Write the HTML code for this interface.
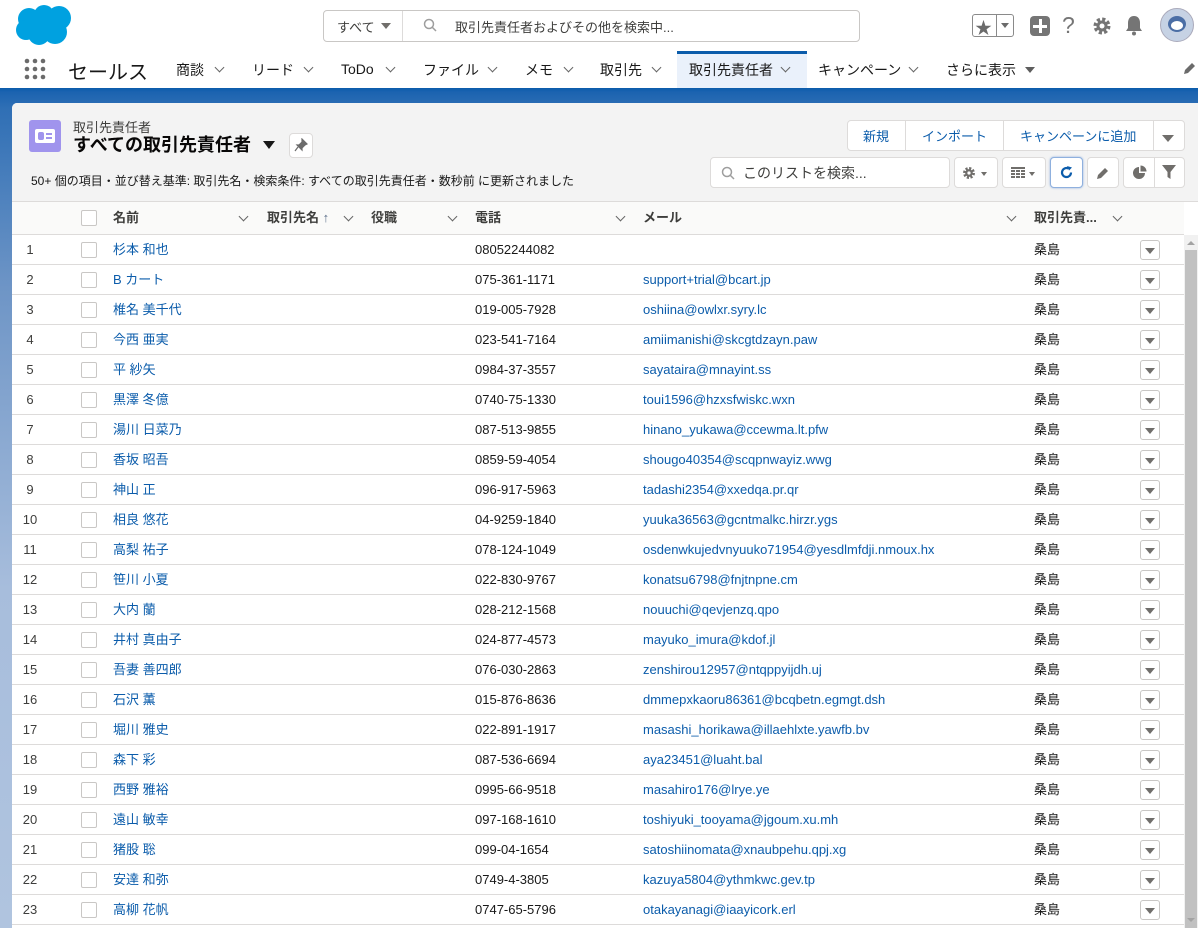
<!DOCTYPE html>
<html><head><meta charset="utf-8">
<style>
*{box-sizing:border-box;margin:0;padding:0}
body{width:1198px;height:928px;overflow:hidden;background:#fff;font-family:"Liberation Sans","Noto Sans CJK JP",sans-serif;font-size:13px;color:#080707;position:relative}
.abs{position:absolute}
.hdr{position:absolute;left:0;top:0;width:1198px;height:50px;background:#fff}
.nav{position:absolute;left:0;top:50px;width:1198px;height:38px;background:#fff}
.nav span{position:absolute;top:11px;font-size:14px;color:#181818}
.chev{position:absolute;width:7px;height:7px;border-right:1.5px solid #666;border-bottom:1.5px solid #666;transform:rotate(45deg)}
.bg{position:absolute;left:0;top:88px;width:1198px;height:840px;background:linear-gradient(180deg,#0b5cab 0,#1b63b0 4px,#2f6fb5 20px,#6e95c6 200px,#a7bddc 500px,#b0c4df 840px)}
.card{position:absolute;left:12px;top:103px;width:1186px;height:825px;background:#fff;border-radius:5px 0 0 0;overflow:hidden}
.ch{position:absolute;left:0;top:0;width:1186px;height:99px;background:#f3f3f3;border-bottom:1px solid #dddbda}
.btn{position:absolute;background:#fff;border:1px solid #dddbda;border-radius:4px}
.th{position:absolute;top:99px;left:0;width:1172px;height:33px;background:#fafaf9;border-bottom:1px solid #dddbda;font-weight:bold;font-size:13px;color:#3e3e3c}
.th span{position:absolute;top:5px}
.row{position:absolute;left:0;width:1172px;height:30px;border-bottom:1px solid #dddbda}
.row span{position:absolute;top:7px}
.n{left:0;width:36px;text-align:center;color:#3e3e3c}
.cb{position:absolute;left:69px;top:7px;width:16px;height:16px;border:1px solid #c9c7c5;border-radius:2px;background:#fff}
.row span.nm{left:101px;color:#0b5cab;top:4px}
.ph{left:463px;color:#181818}
.em{left:631px;color:#0b5cab}
.row span.ow{left:1022px;color:#181818;top:4px}
.ra{position:absolute;left:1128px;top:5px;width:20px;height:20px;border:1px solid #c9c7c5;border-radius:3px;background:#fff}
.ra:after{content:"";position:absolute;left:4px;top:7px;border-left:5px solid transparent;border-right:5px solid transparent;border-top:6px solid #706e6b}
</style></head><body>
<div class="hdr">
 <svg class="abs" style="left:15px;top:4px" width="60" height="42" viewBox="0 0 60 42"><g fill="#00a1e0"><circle cx="14" cy="15" r="11"/><circle cx="29" cy="11" r="10"/><circle cx="44" cy="14" r="12"/><circle cx="40" cy="28" r="12"/><circle cx="24" cy="30" r="11"/><circle cx="11" cy="26" r="10"/><rect x="10" y="12" width="38" height="18"/></g></svg>
 <div class="abs" style="left:323px;top:10px;width:537px;height:32px;border:1px solid #c9c7c5;border-radius:4px;background:#fff"></div>
 <div class="abs" style="left:402px;top:11px;width:1px;height:30px;background:#dddbda"></div>
 <span class="abs" style="left:337px;top:17px;font-size:13px;color:#3e3e3c">すべて</span>
 <div class="abs" style="left:381px;top:23px;border-left:5px solid transparent;border-right:5px solid transparent;border-top:6px solid #706e6b"></div>
 <svg class="abs" style="left:423px;top:18px" width="14" height="14" viewBox="0 0 14 14"><circle cx="6" cy="6" r="4.5" fill="none" stroke="#9e9e9e" stroke-width="1.5"/><path d="M9.5 9.5L13 13" stroke="#9e9e9e" stroke-width="1.5"/></svg>
 <span class="abs" style="left:455px;top:17px;font-size:13px;color:#3e3e3c">取引先責任者およびその他を検索中...</span>
 <div class="abs" style="left:972px;top:14px;width:42px;height:23px;border:1px solid #8a8a8a;border-radius:3px"></div>
 <div class="abs" style="left:996px;top:15px;width:1px;height:21px;background:#8a8a8a"></div>
 <span class="abs" style="left:975px;top:14px;font-size:17px;color:#6b6b6b">★</span>
 <div class="abs" style="left:1001px;top:23px;border-left:4px solid transparent;border-right:4px solid transparent;border-top:5px solid #6b6b6b"></div>
 <div class="abs" style="left:1030px;top:16px;width:20px;height:20px;border-radius:4px;background:#757575"></div>
 <div class="abs" style="left:1039px;top:19px;width:3px;height:14px;background:#fff"></div>
 <div class="abs" style="left:1033px;top:25px;width:14px;height:3px;background:#fff"></div>
 <span class="abs" style="left:1062px;top:12px;font-size:23px;color:#757575">?</span>
 <svg class="abs" style="left:1092px;top:16px" width="20" height="20" viewBox="0 0 20 20"><circle cx="10" cy="10" r="6.5" fill="none" stroke="#757575" stroke-width="4" stroke-dasharray="3 2.1"/><circle cx="10" cy="10" r="5.5" fill="#757575"/><circle cx="10" cy="10" r="2.5" fill="#fff"/></svg>
 <svg class="abs" style="left:1124px;top:15px" width="20" height="21" viewBox="0 0 20 21"><path d="M10 1c-4 0-6 3-6 7v5l-2 3h16l-2-3V8c0-4-2-7-6-7z" fill="#757575"/><circle cx="10" cy="18.5" r="2" fill="#757575"/></svg>
 <div class="abs" style="left:1160px;top:8px;width:34px;height:34px;border-radius:50%;background:#c6d2e4;border:1px solid #aab"></div>
 <div class="abs" style="left:1168px;top:16px;width:18px;height:16px;border-radius:50%;background:#4b6ea5"></div>
 <div class="abs" style="left:1171px;top:21px;width:12px;height:9px;border-radius:50%;background:#fff"></div>
</div>
<div class="nav">
 <svg class="abs" style="left:24px;top:8px" width="22" height="22" viewBox="0 0 22 22" fill="#6b6b6b"><circle cx="3" cy="3" r="2.3"/><circle cx="11" cy="3" r="2.3"/><circle cx="19" cy="3" r="2.3"/><circle cx="3" cy="11" r="2.3"/><circle cx="11" cy="11" r="2.3"/><circle cx="19" cy="11" r="2.3"/><circle cx="3" cy="19" r="2.3"/><circle cx="11" cy="19" r="2.3"/><circle cx="19" cy="19" r="2.3"/></svg>
 <span style="left:68px;top:6px;font-size:20px">セールス</span>
 <span style="left:176px;top:10px">商談</span><i class="chev" style="left:216px;top:14px"></i>
 <span style="left:252px;top:10px">リード</span><i class="chev" style="left:305px;top:14px"></i>
 <span style="left:341px">ToDo</span><i class="chev" style="left:387px;top:14px"></i>
 <span style="left:423px;top:10px">ファイル</span><i class="chev" style="left:489px;top:14px"></i>
 <span style="left:525px;top:10px">メモ</span><i class="chev" style="left:565px;top:14px"></i>
 <div class="abs" style="left:677px;top:1px;width:130px;height:37px;background:#eaf1fb;border-top:3px solid #0b5cab"></div>
 <span style="left:600px;top:10px">取引先</span><i class="chev" style="left:653px;top:14px"></i>
 <span style="left:689px;top:10px">取引先責任者</span><i class="chev" style="left:782px;top:14px"></i>
 <span style="left:818px;top:10px">キャンペーン</span><i class="chev" style="left:910px;top:14px"></i>
 <span style="left:946px;top:10px">さらに表示</span>
 <div class="abs" style="left:1025px;top:17px;border-left:5px solid transparent;border-right:5px solid transparent;border-top:6px solid #5e5e5e"></div>
 <svg class="abs" style="left:1182px;top:12px" width="14" height="14" viewBox="0 0 14 14"><path d="M2 12l1-4 7-7 3 3-7 7z" fill="#6b6b6b"/></svg>
</div>
<div class="bg"></div>
<div class="card">
 <div class="ch">
  <div class="abs" style="left:17px;top:17px;width:32px;height:32px;border-radius:3px;background:#a094ed"></div>
  <div class="abs" style="left:23px;top:26px;width:20px;height:14px;border-radius:2px;background:#fff"></div>
  <div class="abs" style="left:26px;top:29px;width:6px;height:8px;background:#a094ed;border-radius:2px"></div>
  <div class="abs" style="left:34px;top:30px;width:6px;height:2px;background:#a094ed"></div>
  <div class="abs" style="left:34px;top:34px;width:6px;height:2px;background:#a094ed"></div>
  <span class="abs" style="left:61px;top:14px;font-size:13px;color:#3e3e3c">取引先責任者</span>
  <span class="abs" style="left:61px;top:28px;font-size:18px;font-weight:bold">すべての取引先責任者</span>
  <div class="abs" style="left:251px;top:38px;border-left:6px solid transparent;border-right:6px solid transparent;border-top:8px solid #181818"></div>
  <div class="btn" style="left:277px;top:30px;width:24px;height:25px"></div>
  <svg class="abs" style="left:282px;top:35px" width="14" height="14" viewBox="0 0 14 14"><path d="M8 1l5 5-2 1-3 3 0 2-5-5 2 0 3-3z M4 9l-3 4" fill="#6b6b6b" stroke="#6b6b6b" stroke-width="1.2"/></svg>
  <span class="abs" style="left:19px;top:69px;font-size:12px;color:#181818">50+ 個の項目・並び替え基準: 取引先名・検索条件: すべての取引先責任者・数秒前 に更新されました</span>
  <div class="btn" style="left:835px;top:17px;width:338px;height:31px"></div>
  <div class="abs" style="left:893px;top:18px;width:1px;height:29px;background:#dddbda"></div>
  <div class="abs" style="left:991px;top:18px;width:1px;height:29px;background:#dddbda"></div>
  <div class="abs" style="left:1141px;top:18px;width:1px;height:29px;background:#dddbda"></div>
  <span class="abs" style="left:851px;top:23px;color:#0b5cab">新規</span>
  <span class="abs" style="left:910px;top:23px;color:#0b5cab">インポート</span>
  <span class="abs" style="left:1008px;top:23px;color:#0b5cab">キャンペーンに追加</span>
  <div class="abs" style="left:1150px;top:32px;border-left:6px solid transparent;border-right:6px solid transparent;border-top:7px solid #706e6b"></div>
  <div class="btn" style="left:698px;top:54px;width:240px;height:31px"></div>
  <svg class="abs" style="left:709px;top:63px" width="14" height="14" viewBox="0 0 14 14"><circle cx="6" cy="6" r="4.5" fill="none" stroke="#9e9e9e" stroke-width="1.5"/><path d="M9.5 9.5L13 13" stroke="#9e9e9e" stroke-width="1.5"/></svg>
  <span class="abs" style="left:731px;top:60px;color:#3e3e3c;font-size:14px">このリストを検索...</span>
  <div class="btn" style="left:942px;top:54px;width:44px;height:31px"></div>
  <svg class="abs" style="left:950px;top:63px" width="14" height="14" viewBox="0 0 20 20"><circle cx="10" cy="10" r="6.5" fill="none" stroke="#706e6b" stroke-width="4" stroke-dasharray="3 2.1"/><circle cx="10" cy="10" r="5.5" fill="#706e6b"/><circle cx="10" cy="10" r="2.3" fill="#fff"/></svg>
  <div class="abs" style="left:969px;top:69px;border-left:3px solid transparent;border-right:3px solid transparent;border-top:4px solid #706e6b"></div>
  <div class="btn" style="left:990px;top:54px;width:44px;height:31px"></div>
  <svg class="abs" style="left:999px;top:64px" width="14" height="12" viewBox="0 0 14 12" fill="#706e6b"><rect x="0" y="0" width="14" height="2"/><rect x="0" y="3" width="4" height="2"/><rect x="5" y="3" width="4" height="2"/><rect x="10" y="3" width="4" height="2"/><rect x="0" y="6" width="4" height="2"/><rect x="5" y="6" width="4" height="2"/><rect x="10" y="6" width="4" height="2"/><rect x="0" y="9" width="4" height="2"/><rect x="5" y="9" width="4" height="2"/><rect x="10" y="9" width="4" height="2"/></svg>
  <div class="abs" style="left:1017px;top:69px;border-left:3px solid transparent;border-right:3px solid transparent;border-top:4px solid #706e6b"></div>
  <div class="btn" style="left:1038px;top:54px;width:33px;height:31px;border-color:#8fb0de;box-shadow:0 0 2px #8fb0de"></div>
  <svg class="abs" style="left:1047px;top:62px" width="15" height="15" viewBox="0 0 15 15"><path d="M12 7.5A4.5 4.5 0 1 1 9.5 3.5" fill="none" stroke="#0b5cab" stroke-width="2.2"/><path d="M8 1l5 1.5-3 3z" fill="#0b5cab"/></svg>
  <div class="btn" style="left:1075px;top:54px;width:32px;height:31px"></div>
  <svg class="abs" style="left:1084px;top:63px" width="14" height="14" viewBox="0 0 14 14"><path d="M1 13l1-4 7-7 3 3-7 7z" fill="#706e6b"/></svg>
  <div class="btn" style="left:1111px;top:54px;width:62px;height:31px"></div>
  <div class="abs" style="left:1142px;top:55px;width:1px;height:29px;background:#dddbda"></div>
  <svg class="abs" style="left:1120px;top:62px" width="15" height="15" viewBox="0 0 15 15"><path d="M7 2A6 6 0 1 0 13 8H7z" fill="#706e6b"/><path d="M8.5 0.5A6 6 0 0 1 14.5 6.5H8.5z" fill="#706e6b"/></svg>
  <svg class="abs" style="left:1150px;top:62px" width="14" height="15" viewBox="0 0 14 15"><path d="M0 0h14L8.5 7v7l-3-2V7z" fill="#706e6b"/></svg>
 </div>
 <div class="th">
  <div class="cb" style="top:8px"></div>
  <span style="left:101px">名前</span><i class="chev" style="left:228px;top:11px"></i>
  <span style="left:255px">取引先名 <b style="color:#5c6f8a">↑</b></span><i class="chev" style="left:333px;top:11px"></i>
  <span style="left:359px">役職</span><i class="chev" style="left:437px;top:11px"></i>
  <span style="left:463px">電話</span><i class="chev" style="left:605px;top:11px"></i>
  <span style="left:631px">メール</span><i class="chev" style="left:996px;top:11px"></i>
  <span style="left:1022px">取引先責...</span><i class="chev" style="left:1102px;top:11px"></i>
 </div>
 <div class="abs" style="left:1172px;top:132px;width:14px;height:693px;background:#f1f1f1"></div>
 <div class="abs" style="left:1173px;top:147px;width:12px;height:678px;background:#c1c1c1"></div>
 <div class="abs" style="left:1175px;top:138px;border-left:4px solid transparent;border-right:4px solid transparent;border-bottom:4px solid #a3a3a3"></div>

 <div class="row" style="top:132px"><span class="n">1</span><i class="cb"></i><span class="nm">杉本 和也</span><span class="ph">08052244082</span><span class="em"></span><span class="ow">桑島</span><i class="ra"></i></div>
 <div class="row" style="top:162px"><span class="n">2</span><i class="cb"></i><span class="nm">B カート</span><span class="ph">075-361-1171</span><span class="em">support+trial@bcart.jp</span><span class="ow">桑島</span><i class="ra"></i></div>
 <div class="row" style="top:192px"><span class="n">3</span><i class="cb"></i><span class="nm">椎名 美千代</span><span class="ph">019-005-7928</span><span class="em">oshiina@owlxr.syry.lc</span><span class="ow">桑島</span><i class="ra"></i></div>
 <div class="row" style="top:222px"><span class="n">4</span><i class="cb"></i><span class="nm">今西 亜実</span><span class="ph">023-541-7164</span><span class="em">amiimanishi@skcgtdzayn.paw</span><span class="ow">桑島</span><i class="ra"></i></div>
 <div class="row" style="top:252px"><span class="n">5</span><i class="cb"></i><span class="nm">平 紗矢</span><span class="ph">0984-37-3557</span><span class="em">sayataira@mnayint.ss</span><span class="ow">桑島</span><i class="ra"></i></div>
 <div class="row" style="top:282px"><span class="n">6</span><i class="cb"></i><span class="nm">黒澤 冬億</span><span class="ph">0740-75-1330</span><span class="em">toui1596@hzxsfwiskc.wxn</span><span class="ow">桑島</span><i class="ra"></i></div>
 <div class="row" style="top:312px"><span class="n">7</span><i class="cb"></i><span class="nm">湯川 日菜乃</span><span class="ph">087-513-9855</span><span class="em">hinano_yukawa@ccewma.lt.pfw</span><span class="ow">桑島</span><i class="ra"></i></div>
 <div class="row" style="top:342px"><span class="n">8</span><i class="cb"></i><span class="nm">香坂 昭吾</span><span class="ph">0859-59-4054</span><span class="em">shougo40354@scqpnwayiz.wwg</span><span class="ow">桑島</span><i class="ra"></i></div>
 <div class="row" style="top:372px"><span class="n">9</span><i class="cb"></i><span class="nm">神山 正</span><span class="ph">096-917-5963</span><span class="em">tadashi2354@xxedqa.pr.qr</span><span class="ow">桑島</span><i class="ra"></i></div>
 <div class="row" style="top:402px"><span class="n">10</span><i class="cb"></i><span class="nm">相良 悠花</span><span class="ph">04-9259-1840</span><span class="em">yuuka36563@gcntmalkc.hirzr.ygs</span><span class="ow">桑島</span><i class="ra"></i></div>
 <div class="row" style="top:432px"><span class="n">11</span><i class="cb"></i><span class="nm">高梨 祐子</span><span class="ph">078-124-1049</span><span class="em">osdenwkujedvnyuuko71954@yesdlmfdji.nmoux.hx</span><span class="ow">桑島</span><i class="ra"></i></div>
 <div class="row" style="top:462px"><span class="n">12</span><i class="cb"></i><span class="nm">笹川 小夏</span><span class="ph">022-830-9767</span><span class="em">konatsu6798@fnjtnpne.cm</span><span class="ow">桑島</span><i class="ra"></i></div>
 <div class="row" style="top:492px"><span class="n">13</span><i class="cb"></i><span class="nm">大内 蘭</span><span class="ph">028-212-1568</span><span class="em">nouuchi@qevjenzq.qpo</span><span class="ow">桑島</span><i class="ra"></i></div>
 <div class="row" style="top:522px"><span class="n">14</span><i class="cb"></i><span class="nm">井村 真由子</span><span class="ph">024-877-4573</span><span class="em">mayuko_imura@kdof.jl</span><span class="ow">桑島</span><i class="ra"></i></div>
 <div class="row" style="top:552px"><span class="n">15</span><i class="cb"></i><span class="nm">吾妻 善四郎</span><span class="ph">076-030-2863</span><span class="em">zenshirou12957@ntqppyijdh.uj</span><span class="ow">桑島</span><i class="ra"></i></div>
 <div class="row" style="top:582px"><span class="n">16</span><i class="cb"></i><span class="nm">石沢 薫</span><span class="ph">015-876-8636</span><span class="em">dmmepxkaoru86361@bcqbetn.egmgt.dsh</span><span class="ow">桑島</span><i class="ra"></i></div>
 <div class="row" style="top:612px"><span class="n">17</span><i class="cb"></i><span class="nm">堀川 雅史</span><span class="ph">022-891-1917</span><span class="em">masashi_horikawa@illaehlxte.yawfb.bv</span><span class="ow">桑島</span><i class="ra"></i></div>
 <div class="row" style="top:642px"><span class="n">18</span><i class="cb"></i><span class="nm">森下 彩</span><span class="ph">087-536-6694</span><span class="em">aya23451@luaht.bal</span><span class="ow">桑島</span><i class="ra"></i></div>
 <div class="row" style="top:672px"><span class="n">19</span><i class="cb"></i><span class="nm">西野 雅裕</span><span class="ph">0995-66-9518</span><span class="em">masahiro176@lrye.ye</span><span class="ow">桑島</span><i class="ra"></i></div>
 <div class="row" style="top:702px"><span class="n">20</span><i class="cb"></i><span class="nm">遠山 敏幸</span><span class="ph">097-168-1610</span><span class="em">toshiyuki_tooyama@jgoum.xu.mh</span><span class="ow">桑島</span><i class="ra"></i></div>
 <div class="row" style="top:732px"><span class="n">21</span><i class="cb"></i><span class="nm">猪股 聡</span><span class="ph">099-04-1654</span><span class="em">satoshiinomata@xnaubpehu.qpj.xg</span><span class="ow">桑島</span><i class="ra"></i></div>
 <div class="row" style="top:762px"><span class="n">22</span><i class="cb"></i><span class="nm">安達 和弥</span><span class="ph">0749-4-3805</span><span class="em">kazuya5804@ythmkwc.gev.tp</span><span class="ow">桑島</span><i class="ra"></i></div>
 <div class="row" style="top:792px"><span class="n">23</span><i class="cb"></i><span class="nm">高柳 花帆</span><span class="ph">0747-65-5796</span><span class="em">otakayanagi@iaayicork.erl</span><span class="ow">桑島</span><i class="ra"></i></div>
 <div class="abs" style="left:1175px;top:815px;border-left:4px solid transparent;border-right:4px solid transparent;border-top:4px solid #a3a3a3"></div>
</div>
</body></html>
